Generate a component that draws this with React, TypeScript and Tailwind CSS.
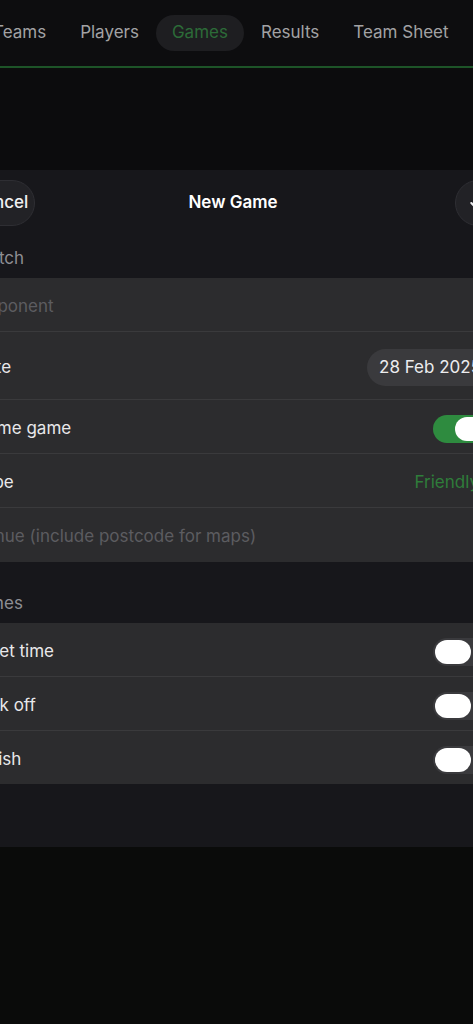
import React from 'react';
import { Check, ChevronsUpDown } from 'lucide-react';

const tabs = ['Teams', 'Players', 'Games', 'Results', 'Team Sheet'];

const Toggle: React.FC<{ on?: boolean }> = ({ on }) => (
  <div
    className={
      on
        ? 'relative h-[28px] w-[60px] shrink-0 rounded-full bg-[#2e8b3f]'
        : 'relative h-[28px] w-[60px] shrink-0 rounded-full bg-[#3a3a3d]'
    }
  >
    <div
      className={
        on
          ? 'absolute top-[2px] left-[22px] h-[24px] w-[36px] rounded-full bg-white'
          : 'absolute top-[2px] left-[2px] h-[24px] w-[36px] rounded-full bg-white'
      }
    />
  </div>
);

const Sep = () => <div className="h-px bg-[#3a3a3c]" />;

const App: React.FC = () => {
  return (
    <div
      className="min-h-[1024px] w-[473px] overflow-hidden bg-[#0a0b0a] text-[17px] text-[#e8e8ea]"
      style={{ fontFamily: 'Inter, "Liberation Sans", sans-serif' }}
    >
      {/* Tab bar */}
      <div className="bg-[#0d0d0f]">
        <nav className="ml-[-24px] flex h-[66px] items-center whitespace-nowrap">
          {tabs.map((t) => (
            <div
              key={t}
              className={
                t === 'Games'
                  ? 'flex h-[36px] items-center rounded-full bg-[#1e1e21] px-[16px] text-[#2c6b38]'
                  : 'flex h-[36px] items-center px-[17px] text-[#a2a2a4]'
              }
            >
              {t}
            </div>
          ))}
        </nav>
        <div className="h-[2px] bg-[#1d5428]" />
      </div>

      <div className="h-[102px] bg-[#0c0c0d]" />

      {/* Sheet */}
      <div className="ml-[-45px] w-[562px] bg-[#17171b] pb-[63px]">
        <div className="grid grid-cols-[1fr_auto_1fr] items-center pl-[10px] pr-[16px] pt-[10px]">
          <div className="flex h-[46px] w-[70px] items-center justify-center rounded-full border border-[#2e2e33] bg-[#222226] font-medium text-[#f0f0f2]">
            Cancel
          </div>
          <div className="font-semibold text-white">New Game</div>
          <div className="flex justify-end">
            <div className="flex h-[46px] w-[46px] items-center justify-center rounded-full border border-[#2e2e33] bg-[#222226] text-[#f0f0f2]">
              <Check className="h-5 w-5" strokeWidth={2.5} />
            </div>
          </div>
        </div>

        <div className="flex h-[52px] items-end pl-[19px] pr-[24px] pb-[7px] text-[#8e8e93]">Match</div>
        <div className="bg-[#2c2c2e]">
          <div className="flex h-[53px] items-center pl-[19px] pr-[24px] pt-[4px] text-[#5c5c60]">Opponent</div>
          <Sep />
          <div className="flex h-[67px] items-center justify-between pl-[19px] pr-[24px] pt-[4px]">
            <span>Date</span>
            <span className="rounded-full bg-[#3a3a3d] px-[12px] py-[6px] text-[#ececee]">28 Feb 2025</span>
          </div>
          <Sep />
          <div className="flex h-[53px] items-center justify-between pl-[19px] pr-[24px] pt-[4px]">
            <span>Home game</span>
            <Toggle on />
          </div>
          <Sep />
          <div className="flex h-[53px] items-center justify-between pl-[19px] pr-[24px] pt-[4px]">
            <span>Type</span>
            <span className="flex items-center gap-0.5 text-[#2f7d3a]">
              Friendly
              <ChevronsUpDown className="h-3 w-3" />
            </span>
          </div>
          <Sep />
          <div className="flex h-[54px] items-center pl-[19px] pr-[24px] pt-[4px] text-[#5c5c60]">
            Venue (include postcode for maps)
          </div>
        </div>

        <div className="flex h-[61px] items-end pl-[19px] pr-[24px] pb-[7px] text-[#8e8e93]">Times</div>
        <div className="bg-[#2c2c2e]">
          <div className="flex h-[53px] items-center justify-between pl-[19px] pr-[24px] pt-[4px]">
            <span>Meet time</span>
            <Toggle />
          </div>
          <Sep />
          <div className="flex h-[53px] items-center justify-between pl-[19px] pr-[24px] pt-[4px]">
            <span>Kick off</span>
            <Toggle />
          </div>
          <Sep />
          <div className="flex h-[53px] items-center justify-between pl-[19px] pr-[24px] pt-[4px]">
            <span>Finish</span>
            <Toggle />
          </div>
        </div>
      </div>
    </div>
  );
};

export default App;
